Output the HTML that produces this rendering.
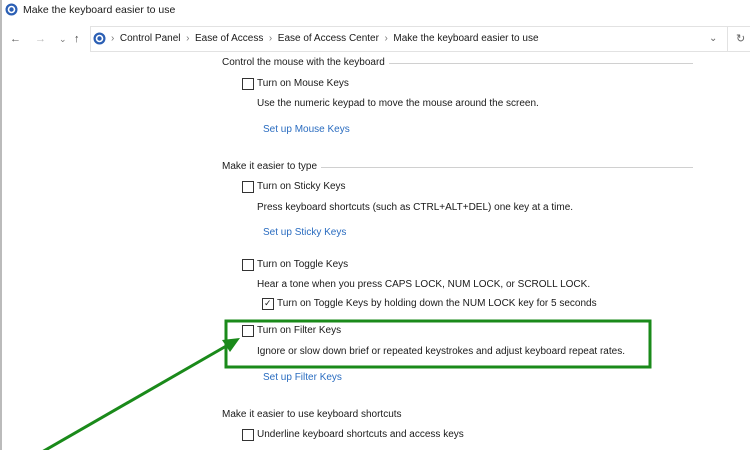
<!DOCTYPE html><html><head><style>
body{margin:0;width:750px;height:450px;background:#fff;position:relative;overflow:hidden;font-family:"Liberation Sans",sans-serif;font-size:10px;color:#1a1a1a}
.t{position:absolute;white-space:nowrap;line-height:14px}
.l{color:#2a6cc0}
.cb{position:absolute;width:10px;height:10px;border:1px solid #333;background:#fff}
.h{position:absolute;left:222px;width:471px;height:14px}
.h:before{content:"";position:absolute;left:0;right:0;top:7px;height:1px;background:#d0d0d0}
.h span{position:relative;background:#fff;padding-right:4px;line-height:14px}
</style></head><body>
<div style="position:absolute;left:0;top:0;width:2px;height:450px;background:#bbb"></div>
<svg style="position:absolute;left:5px;top:3px" width="13" height="13"><circle cx="6.5" cy="6.5" r="6" fill="#2b5fb4"/><circle cx="6.5" cy="6.5" r="3" fill="none" stroke="#fff" stroke-width="1.6"/></svg>
<div class="t" style="left:23px;top:3px;font-size:10.5px">Make the keyboard easier to use</div>
<div class="t" style="left:10px;top:32px;color:#555;font-size:11px">←</div>
<div class="t" style="left:35px;top:32px;color:#bbb;font-size:11px">→</div>
<div class="t" style="left:59px;top:32px;color:#777;font-size:9px">⌄</div>
<div class="t" style="left:74px;top:32px;color:#444;font-size:11px">↑</div>
<div style="position:absolute;left:90px;top:26px;width:665px;height:26px;border:1px solid #e2e2e2;box-sizing:border-box"></div>
<div style="position:absolute;left:727px;top:27px;width:1px;height:24px;background:#e2e2e2"></div>
<svg style="position:absolute;left:93px;top:32px" width="13" height="13"><circle cx="6.5" cy="6.5" r="6" fill="#2b5fb4"/><circle cx="6.5" cy="6.5" r="3" fill="none" stroke="#fff" stroke-width="1.6"/></svg>
<div class="t" style="left:111px;top:32px"><span style="color:#777">›</span>&nbsp; Control Panel &nbsp;<span style="color:#777">›</span>&nbsp; Ease of Access &nbsp;<span style="color:#777">›</span>&nbsp; Ease of Access Center &nbsp;<span style="color:#777">›</span>&nbsp; Make the keyboard easier to use</div>
<div class="t" style="left:709px;top:32px;color:#666">⌄</div>
<div class="t" style="left:736px;top:32px;color:#666;font-size:11px">↻</div>

<div class="h" style="top:56px"><span>Control the mouse with the keyboard</span></div>
<div class="cb" style="left:242px;top:78px"></div><div class="t" style="left:257px;top:77px">Turn on Mouse Keys</div>
<div class="t" style="left:257px;top:97px">Use the numeric keypad to move the mouse around the screen.</div>
<div class="t l" style="left:263px;top:123px">Set up Mouse Keys</div>

<div class="h" style="top:160px"><span>Make it easier to type</span></div>
<div class="cb" style="left:242px;top:181px"></div><div class="t" style="left:257px;top:180px">Turn on Sticky Keys</div>
<div class="t" style="left:257px;top:201px">Press keyboard shortcuts (such as CTRL+ALT+DEL) one key at a time.</div>
<div class="t l" style="left:263px;top:226px">Set up Sticky Keys</div>
<div class="cb" style="left:242px;top:259px"></div><div class="t" style="left:257px;top:258px">Turn on Toggle Keys</div>
<div class="t" style="left:257px;top:278px">Hear a tone when you press CAPS LOCK, NUM LOCK, or SCROLL LOCK.</div>
<div class="cb" style="left:262px;top:298px"></div><div class="t" style="left:264px;top:296px;font-size:9px">✓</div><div class="t" style="left:277px;top:297px">Turn on Toggle Keys by holding down the NUM LOCK key for 5 seconds</div>
<div class="cb" style="left:242px;top:325px"></div><div class="t" style="left:257px;top:324px">Turn on Filter Keys</div>
<div class="t" style="left:257px;top:345px">Ignore or slow down brief or repeated keystrokes and adjust keyboard repeat rates.</div>
<div class="t l" style="left:263px;top:371px">Set up Filter Keys</div>
<div class="t" style="left:222px;top:408px">Make it easier to use keyboard shortcuts</div>
<div class="cb" style="left:242px;top:429px"></div><div class="t" style="left:257px;top:428px">Underline keyboard shortcuts and access keys</div>

<svg style="position:absolute;left:0;top:0" width="750" height="450">
<rect x="226" y="321" width="424" height="46" fill="none" stroke="#1a8a1a" stroke-width="3"/>
<line x1="42" y1="452" x2="228" y2="345" stroke="#1a8a1a" stroke-width="3"/>
<polygon points="240,338 222,340 230,352" fill="#1a8a1a"/>
</svg>
</body></html>
